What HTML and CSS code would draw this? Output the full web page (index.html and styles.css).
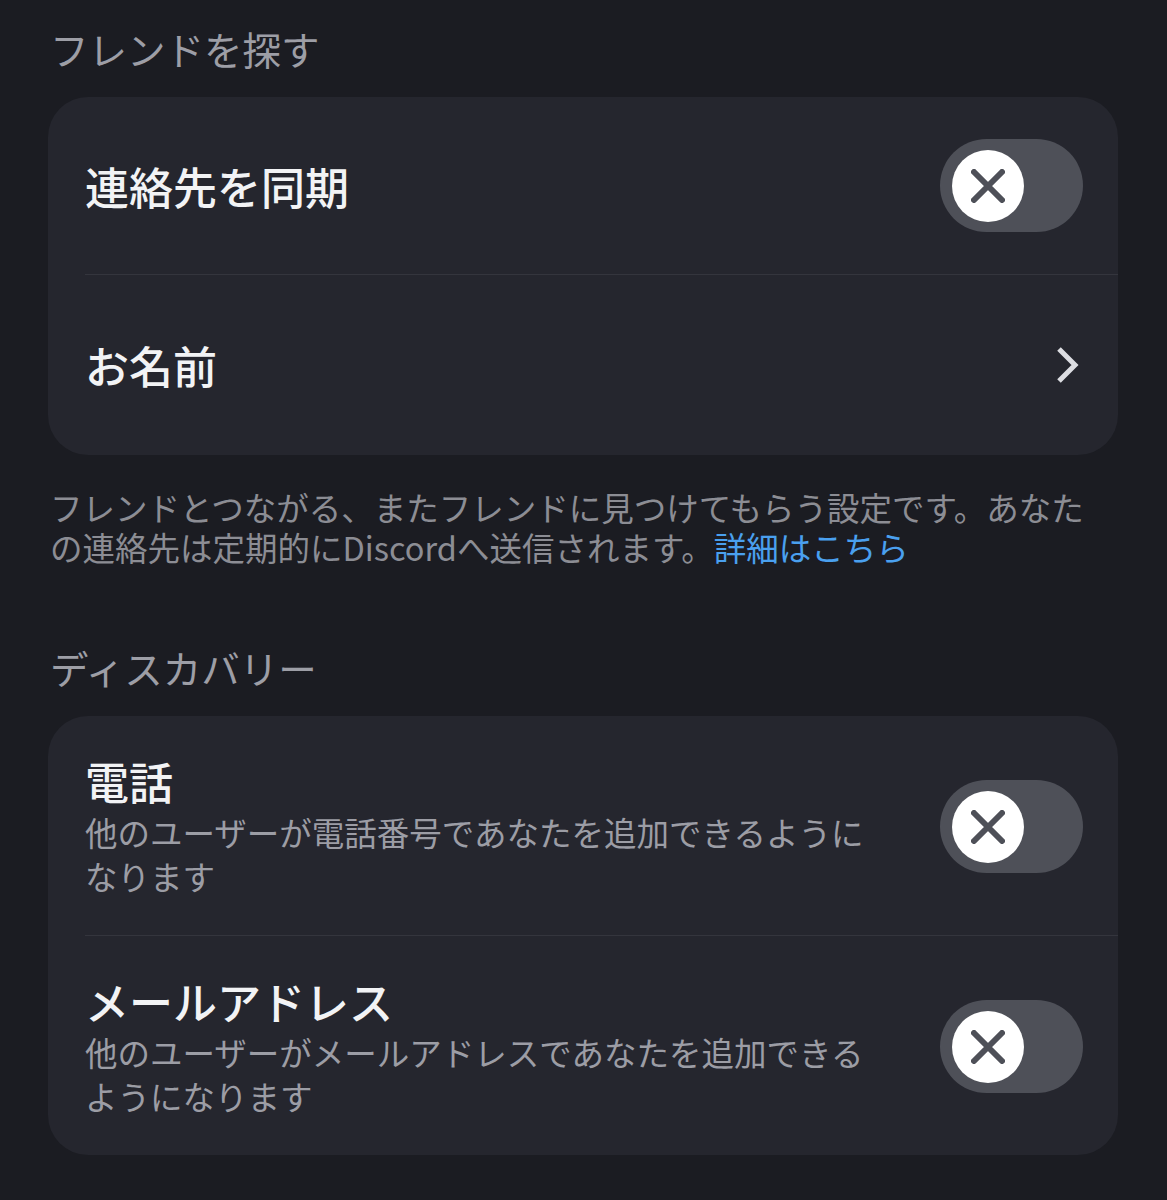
FILE: index.html
```html
<!DOCTYPE html>
<html lang="ja">
<head>
    <meta charset="UTF-8">
    <meta name="viewport" content="width=device-width, initial-scale=1.0">
    <title>フレンドを探す</title>
    <link rel="stylesheet" href="styles.css">
</head>
<body>
    <div class="page">
        <h2 class="section-title">フレンドを探す</h2>
        <div class="card">
            <div class="row row-single">
                <div class="row-text">
                    <div class="row-title">連絡先を同期</div>
                </div>
                <div class="toggle">
                    <div class="knob">
                        <svg width="34" height="34" viewBox="0 0 34 34"><path d="M3 3 L31 31 M31 3 L3 31" stroke="#4e5058" stroke-width="6" stroke-linecap="round"/></svg>
                    </div>
                </div>
            </div>
            <div class="row row-single">
                <div class="row-text">
                    <div class="row-title">お名前</div>
                </div>
                <svg class="chevron" width="26" height="38" viewBox="0 0 26 38"><path d="M4 3 L20 19 L4 35" fill="none" stroke="#dcdde2" stroke-width="5"/></svg>
            </div>
        </div>
        <p class="footnote">フレンドとつながる、またフレンドに見つけてもらう設定です。あなたの連絡先は定期的にDiscordへ送信されます。<a href="#" class="link">詳細はこちら</a></p>

        <h2 class="section-title">ディスカバリー</h2>
        <div class="card">
            <div class="row">
                <div class="row-text">
                    <div class="row-title">電話</div>
                    <div class="row-sub">他のユーザーが電話番号であなたを追加できるようになります</div>
                </div>
                <div class="toggle">
                    <div class="knob">
                        <svg width="34" height="34" viewBox="0 0 34 34"><path d="M3 3 L31 31 M31 3 L3 31" stroke="#4e5058" stroke-width="6" stroke-linecap="round"/></svg>
                    </div>
                </div>
            </div>
            <div class="row">
                <div class="row-text">
                    <div class="row-title">メールアドレス</div>
                    <div class="row-sub">他のユーザーがメールアドレスであなたを追加できるようになります</div>
                </div>
                <div class="toggle">
                    <div class="knob">
                        <svg width="34" height="34" viewBox="0 0 34 34"><path d="M3 3 L31 31 M31 3 L3 31" stroke="#4e5058" stroke-width="6" stroke-linecap="round"/></svg>
                    </div>
                </div>
            </div>
        </div>
    </div>
</body>
</html>
```

FILE: styles.css
```css
body {
    margin: 0;
    background-color: #1b1c22;
    font-family: "Noto Sans CJK JP", "Noto Sans", sans-serif;
    color: #f2f3f5;
}
.page {
    padding: 24px 49px 40px 48px;
}
.section-title {
    margin: 0 0 25px 2px;
    font-size: 38.5px;
    font-weight: 400;
    line-height: 48px;
    color: #9d9ea6;
}
.card {
    background-color: #25262e;
    border-radius: 40px;
    overflow: hidden;
}
.row {
    display: flex;
    align-items: center;
    gap: 60px;
    padding: 39px 35px 37px 0;
    border-bottom: 1px solid #34353d;
    margin-left: 37px;
}
.row:last-child {
    border-bottom: none;
}
.row-single {
    height: 177px;
    padding-top: 0;
    padding-bottom: 0;
}
.row-single:last-child {
    height: 180px;
}
.row-text {
    flex: 1;
    min-width: 0;
}
.row-title {
    font-size: 44px;
    font-weight: 500;
    line-height: 52px;
    color: #f2f3f5;
}
.row-sub {
    margin-top: 3px;
    font-size: 32.5px;
    line-height: 44px;
    color: #9c9da5;
}
.toggle {
    flex-shrink: 0;
    width: 143px;
    height: 93px;
    border-radius: 47px;
    background-color: #4e5058;
    display: flex;
    align-items: center;
    padding-left: 12px;
    box-sizing: border-box;
}
.knob {
    width: 72px;
    height: 72px;
    border-radius: 50%;
    background-color: #ffffff;
    display: flex;
    align-items: center;
    justify-content: center;
}
.chevron {
    margin-right: 2px;
}
.footnote {
    max-width: 1050px;
    margin: 32px 0 76px 2px;
    font-size: 32.5px;
    line-height: 40px;
    color: #8c8d94;
}
.link {
    color: #4aa0ef;
    text-decoration: none;
}
```
